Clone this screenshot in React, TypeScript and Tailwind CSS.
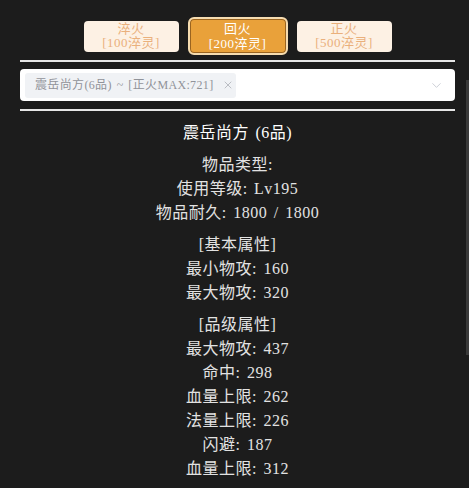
import { ChevronDown, X } from 'lucide-react';

const FONT = '"Liberation Serif", "Noto Sans CJK SC", serif';

const FIRES = [
  { name: '淬火', cost: '[100淬灵]', active: false },
  { name: '回火', cost: '[200淬灵]', active: true },
  { name: '正火', cost: '[500淬灵]', active: false },
];

const GROUPS: string[][] = [
  ['物品类型:', '使用等级: Lv195', '物品耐久: 1800 / 1800'],
  ['[基本属性]', '最小物攻: 160', '最大物攻: 320'],
  ['[品级属性]', '最大物攻: 437', '命中: 298', '血量上限: 262', '法量上限: 226', '闪避: 187', '血量上限: 312'],
];

export default function App() {
  return (
    <div className="relative w-[469px] h-[488px] overflow-hidden bg-[#1c1c1c]" style={{ fontFamily: FONT }}>
      {/* scrollbar thumb */}
      <div className="absolute right-0 top-[80px] w-[3px] h-[275px] bg-[#3a3a3a]" />

      <div className="ml-5 w-[435px] pt-[17px]">
        {/* fire buttons */}
        <div className="flex items-center justify-center gap-[9px] h-[38px]">
          {FIRES.map((f) =>
            f.active ? (
              <button
                key={f.name}
                className="w-[100px] h-[38px] rounded-[6px] bg-[#e9a13a] border-2 border-[#f6dcb0] shadow-[inset_0_0_0_1px_#9a6420] flex flex-col items-center justify-center text-white text-[13px] leading-[15px] tracking-[0.5px]"
              >
                <span>{f.name}</span>
                <span>{f.cost}</span>
              </button>
            ) : (
              <button
                key={f.name}
                className="w-[95px] h-[31px] rounded-[4px] bg-[#fdf1e4] flex flex-col items-center justify-center text-[#eab07c] text-[13px] leading-[14px] tracking-[0.5px]"
              >
                <span>{f.name}</span>
                <span>{f.cost}</span>
              </button>
            ),
          )}
        </div>

        <div className="mt-[5px] h-[2px] bg-[#e6e6e6]" />

        {/* select */}
        <div className="mt-[7px] h-[32px] rounded-[4px] bg-white flex items-center pl-[5px] pr-[11px]">
          <div className="h-[25px] w-[211px] rounded-[3px] bg-[#f0f2f5] flex items-center pl-[10px] gap-[8px] text-[12px] text-[#909399]">
            <span className="min-w-0 tracking-[0.35px] [word-spacing:1.5px] whitespace-nowrap">震岳尚方(6品) ~ [正火MAX:721]</span>
            <X size={12} strokeWidth={1.5} className="text-[#a8abb2] shrink-0" />
          </div>
          <div className="flex-1" />
          <ChevronDown size={15} strokeWidth={1.3} className="text-[#c0c4cc]" />
        </div>

        <div className="mt-[8px] h-[2px] bg-[#e6e6e6]" />

        {/* item info */}
        <div className="mt-[10px] flex flex-col items-center text-[16px] leading-[24px] tracking-[0.5px] [word-spacing:2px]">
          <div className="text-white">震岳尚方 (6品)</div>
          {GROUPS.map((g, i) => (
            <div key={i} className="mt-2 flex flex-col items-center text-[#e2e2e2]">
              {g.map((line, j) => (
                <div key={j}>{line}</div>
              ))}
            </div>
          ))}
        </div>
      </div>
    </div>
  );
}
